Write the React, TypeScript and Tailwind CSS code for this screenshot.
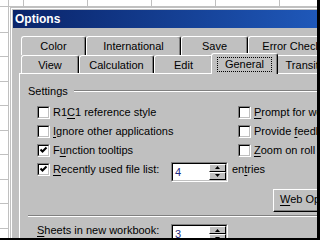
import React from "react";

const face = "bg-[#c0c0c0]";

function U({ children }: { children: React.ReactNode }) {
  return <span className="underline decoration-1 underline-offset-[2px]">{children}</span>;
}

function Check({ on }: { on?: boolean }) {
  return (
    <span className="box-border block w-[13px] h-[13px] shrink-0 border border-t-[#808080] border-l-[#808080] border-r-white border-b-white">
      <span className="box-border block w-full h-full border border-t-black border-l-black border-r-[#c0c0c0] border-b-[#c0c0c0] bg-white">
        {on && (
          <svg width="9" height="9" viewBox="0 0 9 9" className="block">
            <path d="M1.5 3.5 L3.5 5.5 L7.5 1.5" fill="none" stroke="black" strokeWidth="2" />
          </svg>
        )}
      </span>
    </span>
  );
}

function SpinBtn({ up }: { up?: boolean }) {
  return (
    <div className="box-border flex-1 flex items-center justify-center bg-[#c0c0c0] border border-t-white border-l-white border-r-black border-b-black">
      <svg width="5" height="3" viewBox="0 0 5 3" className="block">
        <path d={up ? "M2.5 0 L5 3 L0 3 Z" : "M0 0 L5 0 L2.5 3 Z"} fill="black" />
      </svg>
    </div>
  );
}

function Spin({ value, className = "" }: { value: string; className?: string }) {
  return (
    <div className={`box-border w-[57px] h-[20px] shrink-0 border border-t-[#808080] border-l-[#808080] border-r-white border-b-white ${className}`}>
      <div className="box-border flex h-full border border-t-black border-l-black border-r-[#c0c0c0] border-b-[#c0c0c0] bg-white">
        <span className="flex-1 pl-[2px] leading-[16px] text-[#1c2a80]">{value}</span>
        <div className="w-[17px] flex flex-col">
          <SpinBtn up />
          <SpinBtn />
        </div>
      </div>
    </div>
  );
}

function Tab({ label, w, tall }: { label: string; w: string; tall?: boolean }) {
  return (
    <div
      className={`box-border shrink-0 ${w} ${tall ? "h-[19px]" : "h-[18px]"} border-l border-t border-r border-white border-r-black rounded-t-[3px] shadow-[inset_-1px_0_#808080] text-center pt-[3px] leading-[13px] whitespace-nowrap overflow-hidden`}
    >
      {label}
    </div>
  );
}

function Row({ on, children }: { on?: boolean; children: React.ReactNode }) {
  return (
    <div className="h-[19px] flex items-center gap-[3px] whitespace-nowrap">
      <Check on={on} />
      <span className="leading-[13px] shrink-0">{children}</span>
    </div>
  );
}

const rowHeights = ["h-[26px]", "h-[24px]", "h-[25px]", "h-[24px]", "h-[25px]", "h-[24px]", "h-[25px]", "h-[24px]", "h-[25px]", "h-[24px]"];

export default function App() {
  return (
    <div className="box-border w-[320px] h-[240px] bg-white overflow-hidden border-r-[3px] border-b-[2px] border-black flex flex-col font-['Liberation_Sans',Arial,sans-serif] text-[11px] text-black">
      {/* sheet column strip */}
      <div className="h-[7px] shrink-0 flex">
        <div className="w-[9px] shrink-0 border-r border-b border-[#c0c0c0]" />
        <div className="w-[15px] shrink-0 border-r border-b border-[#c0c0c0]" />
        <div className="w-[64px] shrink-0 border-r border-b border-[#c0c0c0]" />
        <div className="w-[64px] shrink-0 border-r border-b border-[#c0c0c0]" />
        <div className="w-[64px] shrink-0 border-r border-b border-[#c0c0c0]" />
        <div className="w-[64px] shrink-0 border-r border-b border-[#c0c0c0]" />
        <div className="flex-1 border-b border-[#c0c0c0]" />
      </div>

      <div className="flex flex-1 min-h-0">
        {/* sheet row strip */}
        <div className="w-[9px] shrink-0 flex flex-col border-r border-[#c0c0c0]">
          {rowHeights.map((h, i) => (
            <div key={i} className={`${h} shrink-0 border-b border-[#c0c0c0]`} />
          ))}
        </div>
        <div className="w-px shrink-0" />

        {/* dialog */}
        <div className={`flex-1 min-w-0 ${face} pl-px pt-px`}>
          <div className="h-full border-l border-t border-white pl-px pt-px flex flex-col">
            <div className="h-[18px] shrink-0 flex items-center pl-[2px] bg-gradient-to-r from-[#0a246a] to-[#1f58b9] text-white font-bold text-[12px]">
              Options
            </div>

            <div className="flex-1 flex flex-col pl-[6px] pt-[8px]">
              <div className="flex ml-[2px] h-[19px]">
                <Tab label="Color" w="w-[65px]" tall />
                <Tab label="International" w="w-[95px]" tall />
                <Tab label="Save" w="w-[67px]" tall />
                <Tab label="Error Checking" w="w-[102px]" tall />
              </div>
              <div className="flex ml-[2px] h-[18px] items-end">
                <Tab label="View" w="w-[58px]" />
                <Tab label="Calculation" w="w-[75px]" />
                <Tab label="Edit" w="w-[59px]" />
                <div className={`relative z-10 box-border shrink-0 w-[67px] h-[21px] -mx-[2px] -mb-px ${face} border-l border-t border-r border-white border-r-black rounded-t-[3px] shadow-[inset_-1px_0_#808080] pt-[3px] pl-[5px]`}>
                  <div className="box-border w-[55px] h-[15px] border border-dotted border-black text-center leading-[13px]">
                    General
                  </div>
                </div>
                <Tab label="Transition" w="w-[67px]" />
              </div>

              {/* panel */}
              <div className="flex-1 border-l border-t border-white flex flex-col">
                <div className="h-[14px] mt-[10px] ml-[8px] flex items-center">
                  <span className="leading-[13px]">Settings</span>
                  <div className="flex-1 ml-[6px] h-[2px] border-t border-[#808080] border-b border-b-white" />
                </div>

                <div className="mt-[5px] flex">
                  <div className="w-[218px] shrink-0 pl-[17px] flex flex-col">
                    <Row>
                      R1<U>C</U>1 reference style
                    </Row>
                    <Row>
                      <U>I</U>gnore other applications
                    </Row>
                    <Row on>
                      F<U>u</U>nction tooltips
                    </Row>
                    <div className="h-[19px] flex items-center whitespace-nowrap">
                      <Check on />
                      <span className="ml-[3px] w-[118px] shrink-0 leading-[13px]">
                        <U>R</U>ecently used file list:
                      </span>
                      <Spin value="4" className="mt-[4px]" />
                      <span className="ml-[4px] shrink-0 leading-[13px]">
                        en<U>t</U>ries
                      </span>
                    </div>
                  </div>
                  <div className="flex flex-col">
                    <Row>
                      <U>P</U>rompt for workbook properties
                    </Row>
                    <Row>
                      Provide <U>f</U>eedback with sound
                    </Row>
                    <Row>
                      <U>Z</U>oom on roll with IntelliMouse
                    </Row>
                  </div>
                </div>

                <div className="mt-[10px] ml-[253px] box-border w-[90px] h-[23px] shrink-0 border border-t-white border-l-white border-r-black border-b-black">
                  <div className="box-border h-full border-r border-b border-[#808080] pl-[6px] leading-[19px] whitespace-nowrap">
                    <U>W</U>eb Options...
                  </div>
                </div>

                <div className="mt-[3px] ml-[8px] h-[2px] shrink-0 border-t border-[#808080] border-b border-b-white" />

                <div className="mt-[7px] pl-[17px] flex items-start whitespace-nowrap">
                  <span className="w-[134px] shrink-0 leading-[13px]">
                    <U>S</U>heets in new workbook:
                  </span>
                  <Spin value="3" />
                </div>
              </div>
            </div>
          </div>
        </div>
      </div>
    </div>
  );
}
